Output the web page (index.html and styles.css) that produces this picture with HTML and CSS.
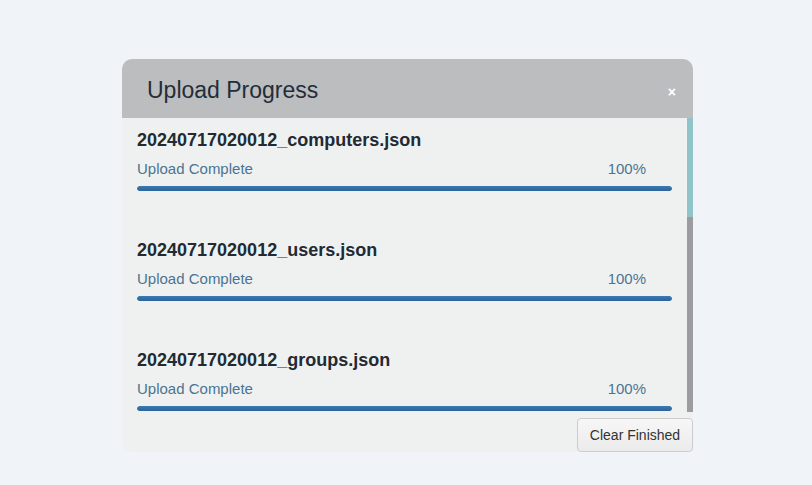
FILE: index.html
```html
<!DOCTYPE html>
<html>
<head>
<meta charset="utf-8">
<link rel="stylesheet" href="styles.css">
</head>
<body>
<div class="page">
  <div class="panel">
    <div class="header">
      <h2 class="title">Upload Progress</h2>
      <span class="close">×</span>
    </div>
    <div class="scroller">
      <div class="list">
        <div class="item">
          <div class="name">20240717020012_computers.json</div>
          <div class="status"><span>Upload Complete</span><span>100%</span></div>
          <div class="bar"><div class="fill" style="width:100%"></div></div>
        </div>
        <div class="item">
          <div class="name">20240717020012_users.json</div>
          <div class="status"><span>Upload Complete</span><span>100%</span></div>
          <div class="bar"><div class="fill" style="width:100%"></div></div>
        </div>
        <div class="item">
          <div class="name">20240717020012_groups.json</div>
          <div class="status"><span>Upload Complete</span><span>100%</span></div>
          <div class="bar"><div class="fill" style="width:100%"></div></div>
        </div>
      </div>
      <div class="scrollbar"><div class="thumb"></div></div>
    </div>
    <div class="footer">
      <button class="btn">Clear Finished</button>
    </div>
  </div>
</div>
</body>
</html>
```
FILE: styles.css
```css
html, body {
  margin: 0;
  padding: 0;
  background: #f0f4f9;
  font-family: "Liberation Sans", Arial, sans-serif;
}
.page {
  padding: 59px 0 0 122px;
}
.panel {
  width: 571px;
  background: #eff1f1;
  border-radius: 10px 10px 0 10px;
}
.header {
  height: 59px;
  background: #bcbdbf;
  border-radius: 10px 10px 0 0;
  display: flex;
  align-items: center;
  justify-content: space-between;
  padding: 0 16px 0 25px;
}
.title {
  margin: 3px 0 0 0;
  font-weight: normal;
  font-size: 23px;
  color: #232d3a;
}
.close {
  color: #fff;
  font-weight: bold;
  font-size: 14px;
  margin-top: 7px;
  margin-right: 1px;
}
.scroller {
  height: 294px;
  display: flex;
}
.list {
  flex: 1;
  min-width: 0;
}
.scrollbar {
  width: 6px;
  background: #9b9ba0;
}
.thumb {
  height: 99px;
  background: #8fc4c9;
}
.item {
  height: 110px;
  box-sizing: border-box;
  padding: 11px 15px 0 15px;
}
.name {
  font-size: 18px;
  font-weight: bold;
  line-height: 22px;
  color: #222a33;
}
.status {
  display: flex;
  justify-content: space-between;
  margin-top: 8px;
  padding-right: 26px;
  font-size: 15px;
  line-height: 20px;
  color: #4b7393;
}
.bar {
  margin-top: 7px;
  height: 5px;
  background: #dfe3e6;
  border-radius: 3px;
  overflow: hidden;
}
.fill {
  height: 100%;
  background: linear-gradient(#3a7ab3, #2a6398);
  border-radius: 3px;
}
.footer {
  height: 40px;
  box-sizing: border-box;
  padding-top: 6px;
  display: flex;
  justify-content: flex-end;
}
.btn {
  height: 34px;
  width: 116px;
  font-family: "Liberation Sans", Arial, sans-serif;
  font-size: 14px;
  color: #333;
  background: linear-gradient(#f7f7f7, #ebebeb);
  border: 1px solid #ccc;
  border-radius: 4px;
  padding: 0;
}
```
